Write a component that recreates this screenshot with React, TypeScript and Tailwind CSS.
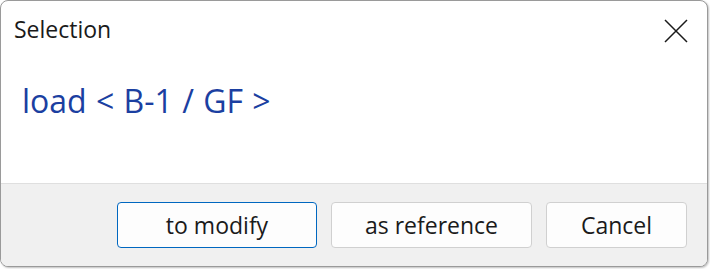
import React from "react";

export default function App() {
  const font = { fontFamily: '"Open Sans", "Noto Sans", sans-serif' };
  return (
    <div className="w-[710px] h-[269px] bg-white" style={font}>
      <div className="w-[708px] h-[267px] rounded-[8px] border border-[#9a9a9a] shadow-[1px_1px_2px_rgba(0,0,0,0.25)] overflow-hidden flex flex-col bg-white">
        <div className="h-[182px] flex flex-col">
          <div className="flex items-start justify-between h-[44px]">
            <div className="pl-[13px] pt-[13px] text-[23px] leading-[31px] text-[#1a1a1a]">Selection</div>
            <div className="pt-[18px] pr-[19px]">
              <svg width="24" height="24" viewBox="0 0 24 24">
                <path d="M1 1 L23 23 M23 1 L1 23" stroke="#1a1a1a" strokeWidth="1.5" fill="none" />
              </svg>
            </div>
          </div>
          <div className="pl-[21px] pt-[34px] text-[32px] leading-[44px] text-[#1b3fa1]" style={{ wordSpacing: "1px" }}>
            load &lt; B-1 / GF &gt;
          </div>
        </div>
        <div className="flex-1 bg-[#f0f0f0] border-t border-[#dfdfdf] flex items-start justify-end pt-[18px] pr-[20px] gap-[14px]">
          <button className="w-[200px] h-[46px] rounded-[4px] border border-[#0067c0] bg-[#fdfdfd] text-[23px] text-[#1a1a1a]">
            to modify
          </button>
          <button className="w-[201px] h-[46px] rounded-[4px] border border-[#d0d0d0] bg-[#fdfdfd] text-[23px] text-[#1a1a1a]">
            as reference
          </button>
          <button className="w-[141px] h-[46px] rounded-[4px] border border-[#d0d0d0] bg-[#fdfdfd] text-[23px] text-[#1a1a1a]">
            Cancel
          </button>
        </div>
      </div>
    </div>
  );
}
